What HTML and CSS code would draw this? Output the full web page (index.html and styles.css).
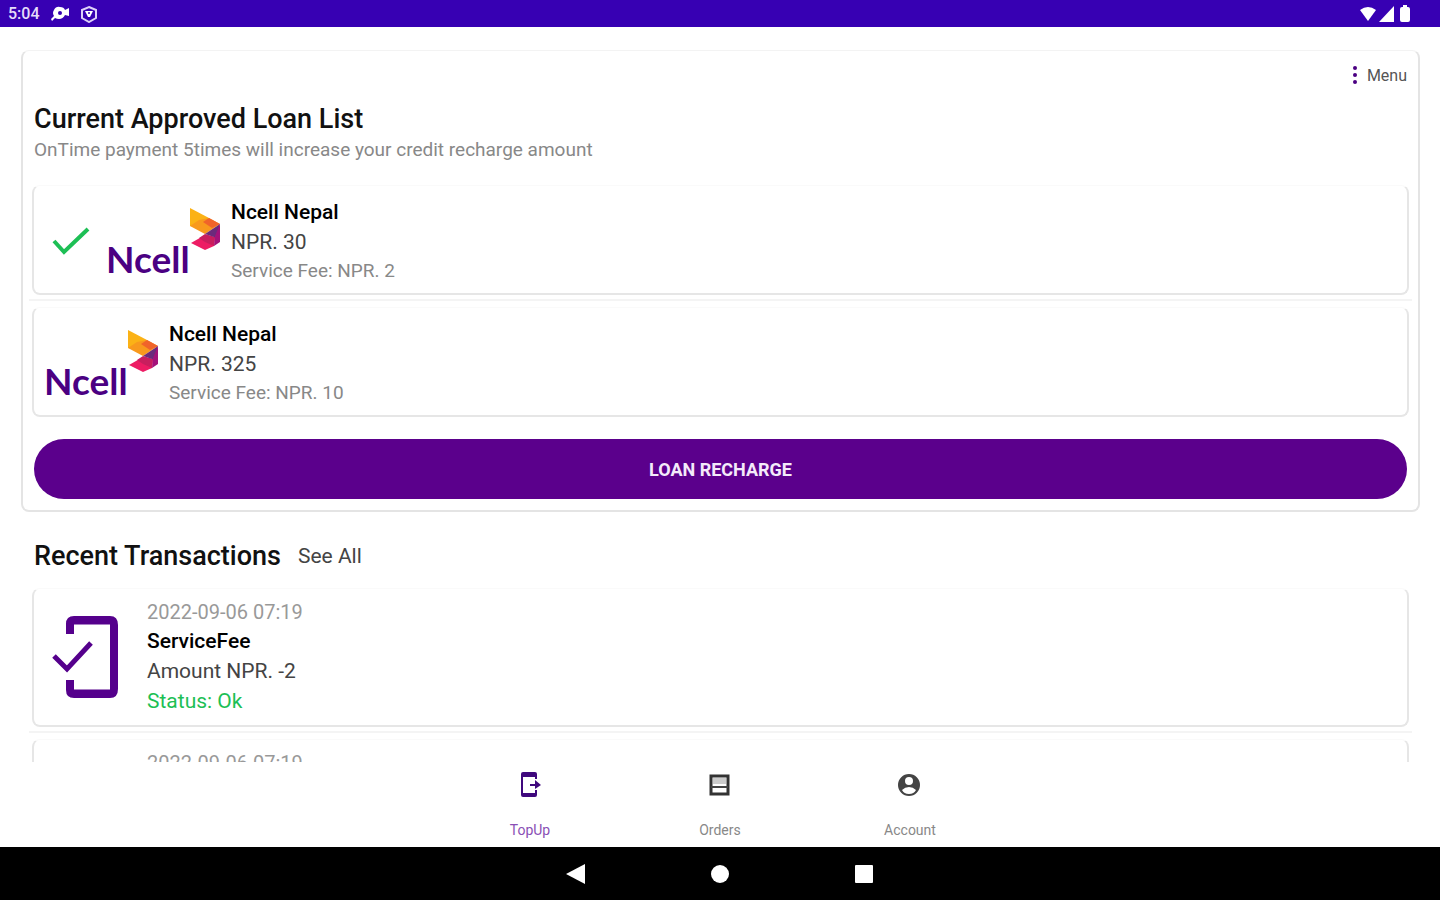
FILE: index.html
```
<!DOCTYPE html>
<html lang="en">
<head>
<meta charset="utf-8">
<title>TopUp</title>
<link rel="stylesheet" href="styles.css">
</head>
<body>
<svg class="defs" aria-hidden="true">
  <symbol id="ncell-mark" viewBox="0 0 32 44">
    <path fill="#fbb216" d="M1 1 20 11 10 20 1 19Z"/>
    <path fill="#f8991d" d="M1 19 10 13 20 11 31 17 16 27Z"/>
    <path fill="#f0642a" d="M14 15 20 11 31 17 23 21Z"/>
    <path fill="#ed1c64" d="M2 36 16 28 26 30 25 39 16 43Z"/>
    <path fill="#c81e5e" d="M10 31 16 27 26 30 25 39 16 35Z"/>
    <path fill="#6b2a7b" d="M16 27 31 17 28 31Z"/>
    <path fill="#a3127a" d="M31 17V35L25 39 26 29Z"/>
  </symbol>
</svg>
<header class="status-bar">
  <div class="status-left">
    <span class="clock">5:04</span>
    <svg width="20" height="18" viewBox="0 0 20 18"><path fill="#fff" d="M4 5Q6 1 10 2Q14 2 15 5L19 3V11L15 10Q13 14 9 14Q7 14 5 13L2 16 1 14 4 11Q2 8 4 5Z"/><circle cx="10" cy="8" r="2" fill="#3700b3"/></svg>
    <svg width="18" height="18" viewBox="0 0 18 18"><path fill="none" stroke="#ddd0f8" stroke-width="2" d="M9 2 16 5V13L9 17 2 13V5Z"/><path fill="#fff" d="M5 6H13L10 12H8Z"/><circle cx="9" cy="8" r="1" fill="#3700b3"/></svg>
  </div>
  <div class="status-right">
    <svg width="18" height="16" viewBox="0 0 18 16"><path fill="#fff" d="M1 4Q9-2 17 4L9 15Z"/></svg>
    <svg width="15" height="16" viewBox="0 0 15 16"><path fill="#fff" d="M15 0V16H0Z"/></svg>
    <svg width="12" height="18" viewBox="0 0 12 18"><path fill="#fff" d="M3 2H4V0H8V2H9Q11 2 11 4V15Q11 17 9 17H3Q1 17 1 15V4Q1 2 3 2Z"/></svg>
  </div>
</header>
<main class="content">
  <section class="panel">
    <div class="menu-row">
      <button class="menu" type="button">
        <svg width="6" height="20" viewBox="0 0 6 20" fill="#4b0082"><circle cx="3" cy="3" r="2"/><circle cx="3" cy="10" r="2"/><circle cx="3" cy="17" r="2"/></svg>
        Menu
      </button>
    </div>
    <h1 class="title">Current Approved Loan List</h1>
    <p class="subtitle">OnTime payment 5times will increase your credit recharge amount</p>
    <div class="list">
      <article class="card loan">
        <svg class="tick" width="38" height="30" viewBox="0 0 38 30"><path fill="none" stroke="#1dbf55" stroke-width="4" d="M2 15 12 26 36 3"/></svg>
        <div class="ncell"><span class="wordmark">Ncell</span><svg class="mark"><use href="#ncell-mark"/></svg></div>
        <div class="lines">
          <h2 class="name">Ncell Nepal</h2>
          <p class="amount">NPR. 30</p>
          <p class="fee">Service Fee: NPR. 2</p>
        </div>
      </article>
      <hr class="divider">
      <article class="card loan">
        <div class="ncell"><span class="wordmark">Ncell</span><svg class="mark"><use href="#ncell-mark"/></svg></div>
        <div class="lines">
          <h2 class="name">Ncell Nepal</h2>
          <p class="amount">NPR. 325</p>
          <p class="fee">Service Fee: NPR. 10</p>
        </div>
      </article>
    </div>
    <button class="recharge" type="button">LOAN RECHARGE</button>
  </section>
  <section class="recent">
    <div class="recent-head">
      <h1 class="title">Recent Transactions</h1>
      <a class="see-all" href="#">See All</a>
    </div>
    <div class="list">
      <article class="card transaction">
        <svg class="phone" width="70" height="86" viewBox="0 0 70 86" fill="none" stroke="#55008c"><path stroke-width="8" d="M18 20V10Q18 6 22 6H58Q62 6 62 11V75Q62 80 58 80H22Q18 80 18 76V66"/><path stroke-width="5" d="M20 8H62M20 78H62M2 42 15 55 39 29"/></svg>
        <div class="lines">
          <p class="date">2022-09-06 07:19</p>
          <h2 class="name">ServiceFee</h2>
          <p class="amount">Amount NPR. -2</p>
          <p class="status">Status: Ok</p>
        </div>
      </article>
      <hr class="divider">
      <article class="card transaction">
        <svg class="phone" width="70" height="86" viewBox="0 0 70 86" fill="none" stroke="#55008c"><path stroke-width="8" d="M18 20V10Q18 6 22 6H58Q62 6 62 11V75Q62 80 58 80H22Q18 80 18 76V66"/></svg>
        <div class="lines">
          <p class="date">2022-09-06 07:19</p>
        </div>
      </article>
    </div>
  </section>
</main>
<nav class="tabs">
  <a class="tab active" href="#"><svg width="26" height="26" viewBox="0 0 26 26"><path fill="#3f087d" d="M6 0H18Q20 0 20 2V7H18V5H6V21H18V18H20V23Q20 25 18 25H6Q4 25 4 23V2Q4 0 6 0ZM13 12H18V8L24 13 18 17V14H13Z"/></svg><span>TopUp</span></a>
  <a class="tab" href="#"><svg width="26" height="26" viewBox="0 0 26 26"><path fill="none" stroke="#333" stroke-width="3" d="M4 4H21V22H4Z"/><path fill="#ccc" d="M6 6H19V12H6Z"/><path stroke="#444" stroke-width="2" d="M4 15H21"/></svg><span>Orders</span></a>
  <a class="tab" href="#"><svg width="26" height="26" viewBox="0 0 26 26"><path fill="#444" fill-rule="evenodd" d="M1 13A11 11 0 0 0 23 13A11 11 0 0 0 1 13ZM12 5A4 4 0 0 1 12 13A4 4 0 0 1 12 5ZM5 18Q8 15 12 15T19 18Q17 22 12 22T5 18Z"/></svg><span>Account</span></a>
</nav>
<footer class="system-nav">
  <button type="button" aria-label="Back"><svg width="20" height="20" viewBox="0 0 20 20"><path fill="#fff" d="M19 0V20L0 10Z"/></svg></button>
  <button type="button" aria-label="Home"><svg width="20" height="20" viewBox="0 0 20 20"><circle cx="10" cy="10" r="9" fill="#fff"/></svg></button>
  <button type="button" aria-label="Recent apps"><svg width="20" height="20" viewBox="0 0 20 20"><rect x="1" y="1" width="18" height="18" rx="1" fill="#fff"/></svg></button>
</footer>
</body>
</html>
```
FILE: styles.css
```
* { box-sizing: border-box; }
body {
  margin: 0;
  height: 100vh;
  display: flex;
  flex-direction: column;
  overflow: hidden;
  background: #fff;
  color: #111;
  font-family: Roboto, "Liberation Sans", sans-serif;
}
svg { display: block; flex: none; }
h1, h2, p { margin: 0; }
a { color: inherit; text-decoration: none; }
button { font: inherit; border: 0; background: none; padding: 0; }
.defs { position: absolute; width: 0; height: 0; }

.status-bar {
  flex: none;
  height: 27px;
  padding: 0 29px 0 8px;
  display: flex;
  align-items: center;
  justify-content: space-between;
  background: #3700b3;
  color: #e6dcfa;
}
.status-left { display: flex; align-items: center; gap: 10px; }
.clock { font-size: 16px; font-weight: 500; }
.status-right { display: flex; align-items: center; gap: 2px; }
.status-right svg:last-child { margin-left: 3px; }

.content { flex: 1; min-height: 0; overflow: hidden; padding: 23px 20px 0 21px; }
.panel {
  padding: 10px 11px 11px;
  border: 2px solid #e4e4e4;
  border-top: 1px solid #f3f3f3;
  border-radius: 8px;
}
.menu-row { display: flex; justify-content: flex-end; }
.menu { display: flex; align-items: center; gap: 9px; height: 28px; font-size: 16px; color: #555; }
.title { font-size: 27px; line-height: 32px; font-weight: 500; }
.panel .title { margin-top: 14px; }
.subtitle { font-size: 19px; line-height: 30px; font-weight: 400; color: #888; }
.list { margin: 0 -2px; }
.panel .list { margin-top: 20px; }
.card {
  display: flex;
  align-items: center;
  border: 2px solid #e6e6e6;
  border-top: 1px solid #fafafa;
  border-radius: 8px;
}
.loan { height: 110px; padding: 2px 0 0 10px; }
.divider { height: 2px; margin: 4px -3px 6px; border: 0; background: #f4f4f4; }
.tick { margin: 0 16px 0 8px; }
.ncell { display: flex; margin-right: 10px; align-items: flex-start; width: 115px; height: 68px; }
.wordmark {
  width: 83px;
  align-self: flex-end;
  font-family: Lato, "Noto Sans", sans-serif;
  font-weight: 700;
  font-size: 37px;
  line-height: 32px;
  color: #4b0082;
}
.mark { width: 32px; height: 44px; }
.lines { font-size: 21px; line-height: 30px; }
.name { font-size: 21px; line-height: 30px; font-weight: 500; color: #000; }
.amount { font-weight: 400; color: #444; }
.fee { font-size: 19px; line-height: 28px; color: #888; }
.date { font-size: 20px; line-height: 28px; color: #999; }
.recharge {
  display: block;
  width: 100%;
  height: 60px;
  margin-top: 22px;
  border-radius: 30px;
  background: #5b008c;
  color: #f4eafa;
  font-size: 18px;
  font-weight: 700;
}
.recent { padding: 28px 13px 0; }
.recent-head { display: flex; align-items: center; gap: 17px; margin-bottom: 16px; }
.see-all { font-size: 21px; color: #444; }
.transaction { height: 139px; padding-left: 18px; }
.phone { margin-right: 25px; }
.transaction .lines { height: 118px; }
.status { color: #1dbf55; }

.tabs { flex: none; height: 85px; display: flex; justify-content: center; background: #fff; }
.tab {
  width: 190px;
  padding: 10px 0 8px;
  display: flex;
  flex-direction: column;
  align-items: center;
  justify-content: space-between;
  font-size: 14px;
  line-height: 18px;
  color: #888;
}
.tab.active { color: #8a4fb5; }
.system-nav { flex: none; height: 53px; display: flex; justify-content: center; background: #000; }
.system-nav button { width: 144px; display: flex; align-items: center; justify-content: center; }
```
